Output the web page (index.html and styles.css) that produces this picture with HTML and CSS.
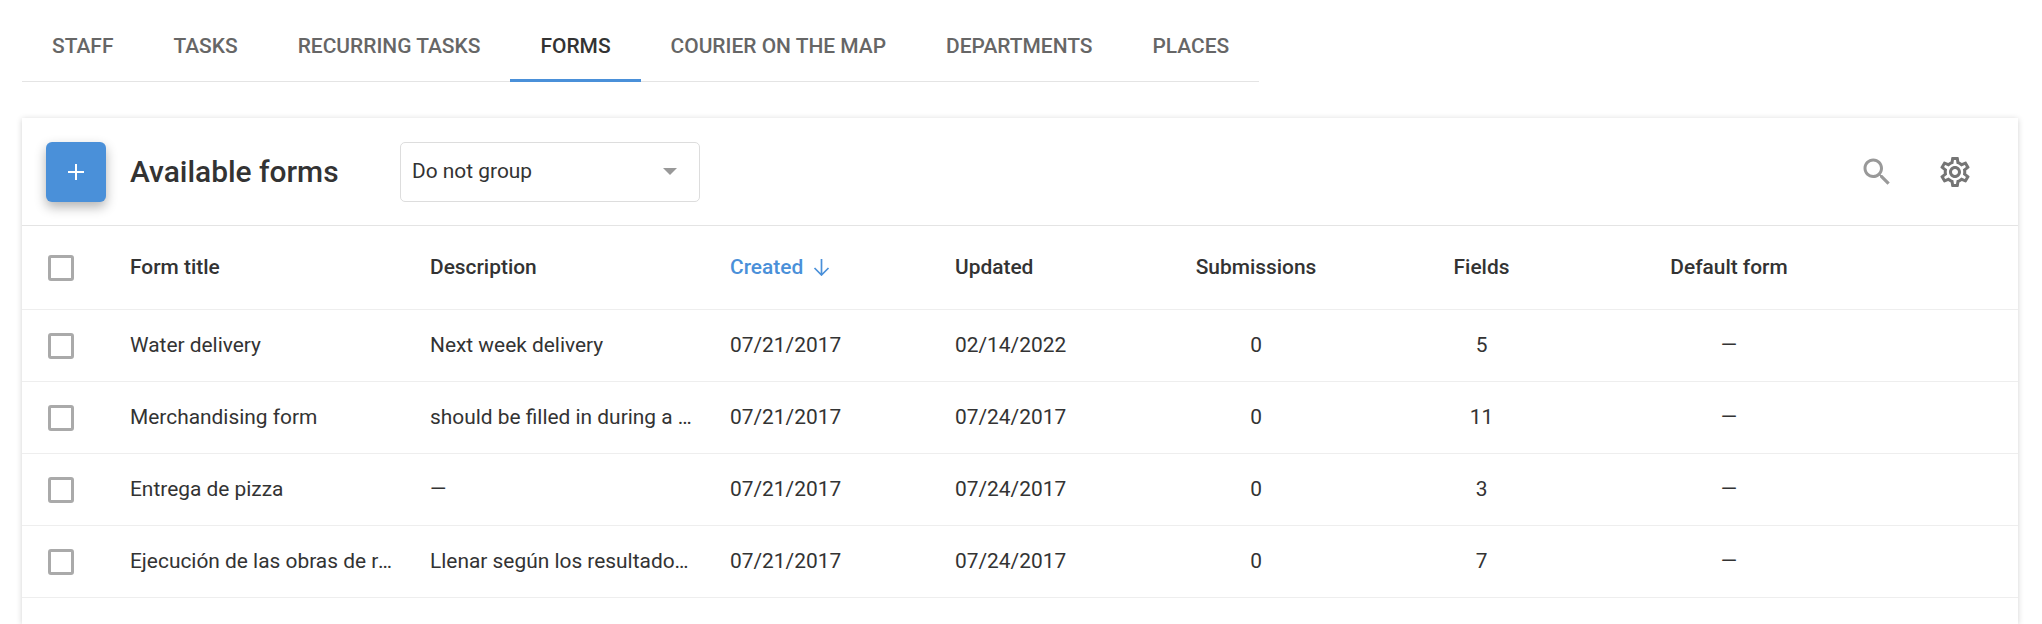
FILE: index.html
```html
<html>
  <head>
    <title>Available forms</title>
    <meta content="text/html;charset=utf-8" http-equiv="Content-Type">
    <link rel="stylesheet" href="styles.css">
  </head>
  <body>
    <div class="tabs">
      <a class="tab">STAFF</a>
      <a class="tab">TASKS</a>
      <a class="tab">RECURRING TASKS</a>
      <a class="tab active">FORMS</a>
      <a class="tab">COURIER ON THE MAP</a>
      <a class="tab">DEPARTMENTS</a>
      <a class="tab">PLACES</a>
    </div>

    <div class="card">
      <div class="toolbar">
        <button class="add-btn" type="button">
          <svg width="16" height="16" viewBox="0 0 16 16"><path d="M7 0h2v7h7v2H9v7H7V9H0V7h7z" fill="#fff"/></svg>
        </button>
        <h2 class="card-title">Available forms</h2>
        <div class="select">
          <span>Do not group</span>
          <i class="select-arrow"></i>
        </div>
        <div class="toolbar-icons">
          <svg class="icon-search" width="36" height="36" viewBox="0 0 24 24"><path d="M15.5 14h-.79l-.28-.27C15.41 12.59 16 11.11 16 9.5 16 5.91 13.09 3 9.5 3S3 5.91 3 9.5 5.91 16 9.5 16c1.61 0 3.09-.59 4.23-1.57l.27.28v.79l5 4.99L20.49 19l-4.99-5zm-6 0C7.01 14 5 11.99 5 9.5S7.01 5 9.5 5 14 7.01 14 9.5 11.99 14 9.5 14z"/></svg>
          <svg class="icon-gear" width="36" height="36" viewBox="0 0 24 24"><path d="M19.43 12.98c.04-.32.07-.64.07-.98 0-.34-.03-.66-.07-.98l2.11-1.65c.19-.15.24-.42.12-.64l-2-3.46c-.09-.16-.26-.25-.44-.25-.06 0-.12.01-.17.03l-2.49 1c-.52-.4-1.08-.73-1.69-.98l-.38-2.65C14.46 2.18 14.25 2 14 2h-4c-.25 0-.46.18-.49.42l-.38 2.65c-.61.25-1.17.59-1.69.98l-2.49-1c-.06-.02-.12-.03-.18-.03-.17 0-.34.09-.43.25l-2 3.46c-.13.22-.07.49.12.64l2.11 1.65c-.04.32-.07.65-.07.98 0 .33.03.66.07.98l-2.11 1.65c-.19.15-.24.42-.12.64l2 3.46c.09.16.26.25.44.25.06 0 .12-.01.17-.03l2.49-1c.52.4 1.08.73 1.69.98l.38 2.65c.03.24.24.42.49.42h4c.25 0 .46-.18.49-.42l.38-2.65c.61-.25 1.17-.59 1.69-.98l2.49 1c.06.02.12.03.18.03.17 0 .34-.09.43-.25l2-3.46c.12-.22.07-.49-.12-.64l-2.11-1.65zm-1.98-1.71c.04.31.05.52.05.73 0 .21-.02.43-.05.73l-.14 1.13.89.7 1.08.84-.7 1.21-1.27-.51-1.04-.42-.9.68c-.43.32-.84.56-1.25.73l-1.06.43-.16 1.13-.2 1.35h-1.4l-.19-1.35-.16-1.13-1.06-.43c-.43-.18-.83-.41-1.23-.71l-.91-.7-1.06.43-1.27.51-.7-1.21 1.08-.84.89-.7-.14-1.13c-.03-.31-.05-.54-.05-.74s.02-.43.05-.73l.14-1.13-.89-.7-1.08-.84.7-1.21 1.27.51 1.04.42.9-.68c.43-.32.84-.56 1.25-.73l1.06-.43.16-1.13.2-1.35h1.39l.19 1.35.16 1.13 1.06.43c.43.18.83.41 1.23.71l.91.7 1.06-.43 1.27-.51.7 1.21-1.07.85-.89.7.14 1.13zM12 8c-2.21 0-4 1.79-4 4s1.79 4 4 4 4-1.79 4-4-1.79-4-4-4zm0 6c-1.1 0-2-.9-2-2s.9-2 2-2 2 .9 2 2-.9 2-2 2z"/></svg>
        </div>
      </div>

      <div class="row head">
        <div class="cell"><i class="check"></i></div>
        <div class="cell">Form title</div>
        <div class="cell">Description</div>
        <div class="cell sorted">Created
          <svg width="17" height="18" viewBox="0 0 17 18"><path d="M8.5 1v16M1.5 10l7 7 7-7" fill="none" stroke="#4a90d9" stroke-width="1.7"/></svg>
        </div>
        <div class="cell">Updated</div>
        <div class="cell center">Submissions</div>
        <div class="cell center">Fields</div>
        <div class="cell center">Default form</div>
      </div>

      <div class="row">
        <div class="cell"><i class="check"></i></div>
        <div class="cell"><span class="clip">Water delivery</span></div>
        <div class="cell"><span class="clip">Next week delivery</span></div>
        <div class="cell">07/21/2017</div>
        <div class="cell">02/14/2022</div>
        <div class="cell center">0</div>
        <div class="cell center">5</div>
        <div class="cell center">—</div>
      </div>
      <div class="row">
        <div class="cell"><i class="check"></i></div>
        <div class="cell"><span class="clip">Merchandising form</span></div>
        <div class="cell"><span class="clip">should be filled in during a visit to the store</span></div>
        <div class="cell">07/21/2017</div>
        <div class="cell">07/24/2017</div>
        <div class="cell center">0</div>
        <div class="cell center">11</div>
        <div class="cell center">—</div>
      </div>
      <div class="row">
        <div class="cell"><i class="check"></i></div>
        <div class="cell"><span class="clip">Entrega de pizza</span></div>
        <div class="cell"><span class="clip">—</span></div>
        <div class="cell">07/21/2017</div>
        <div class="cell">07/24/2017</div>
        <div class="cell center">0</div>
        <div class="cell center">3</div>
        <div class="cell center">—</div>
      </div>
      <div class="row">
        <div class="cell"><i class="check"></i></div>
        <div class="cell"><span class="clip">Ejecución de las obras de reparación</span></div>
        <div class="cell"><span class="clip">Llenar según los resultados de la visita</span></div>
        <div class="cell">07/21/2017</div>
        <div class="cell">07/24/2017</div>
        <div class="cell center">0</div>
        <div class="cell center">7</div>
        <div class="cell center">—</div>
      </div>
    </div>
  </body>
</html>
```

FILE: styles.css
```css
* {
  box-sizing: border-box;
}
html, body {
  height: 100%;
  overflow: hidden;
}
body {
  margin: 0;
  padding: 0 24px 0 22px;
  background-color: #fff;
  color: #333;
  font-family: Roboto, "Liberation Sans", sans-serif;
  font-size: 20.9px;
}
.tabs {
  display: inline-flex;
  vertical-align: top;
  height: 82px;
  border-bottom: 1px solid #e4e4e4;
}
.tab {
  display: flex;
  align-items: center;
  height: 82px;
  padding: 12px 30px 0;
  color: #666;
  font-size: 20.95px;
  font-weight: 500;
  border-bottom: 3px solid transparent;
}
.tab.active {
  color: #333;
  border-bottom-color: #4a90d9;
}
.card {
  margin-top: 36px;
  height: 506px;
  background-color: #fff;
  box-shadow: 0 1px 6px rgba(0, 0, 0, .18);
}
.toolbar {
  display: flex;
  align-items: center;
  height: 108px;
  padding: 0 45px 0 24px;
  border-bottom: 1px solid #e4e4e4;
}
.add-btn {
  display: flex;
  align-items: center;
  justify-content: center;
  flex: none;
  width: 60px;
  height: 60px;
  padding: 0;
  border: 0;
  border-radius: 6px;
  background-color: #4a90d9;
  box-shadow: 0 5px 12px rgba(0, 0, 0, .3);
}
.card-title {
  width: 270px;
  margin: 0 0 0 24px;
  font-size: 29.9px;
  font-weight: 500;
}
.select {
  display: flex;
  align-items: center;
  justify-content: space-between;
  width: 300px;
  height: 60px;
  padding: 0 22px 2px 11px;
  border: 1px solid #ddd;
  border-radius: 5px;
  font-size: 20.9px;
}
.select-arrow {
  width: 0;
  height: 0;
  margin-top: 2px;
  border-left: 7px solid transparent;
  border-right: 7px solid transparent;
  border-top: 7px solid #999;
}
.toolbar-icons {
  display: flex;
  gap: 42px;
  margin-left: auto;
}
.icon-search {
  fill: #999;
}
.icon-gear {
  fill: #757575;
}
.row {
  display: grid;
  grid-template-columns: 108px 300px 300px 225px 210px 182px 269px 226px 1fr;
  align-items: center;
  height: 72px;
  padding-bottom: 1px;
  border-bottom: 1px solid #eee;
  font-size: 20.9px;
}
.row.head {
  height: 84px;
  font-weight: 500;
}
.cell {
  min-width: 0;
}
.center {
  text-align: center;
}
.clip {
  display: block;
  width: 264px;
  overflow: hidden;
  white-space: nowrap;
  text-overflow: ellipsis;
}
.check {
  display: block;
  width: 26px;
  height: 26px;
  margin: 2px 0 0 26px;
  border: 3px solid #aaa;
  border-radius: 3px;
}
.sorted {
  display: flex;
  align-items: center;
  gap: 10px;
  color: #4a90d9;
}
```
